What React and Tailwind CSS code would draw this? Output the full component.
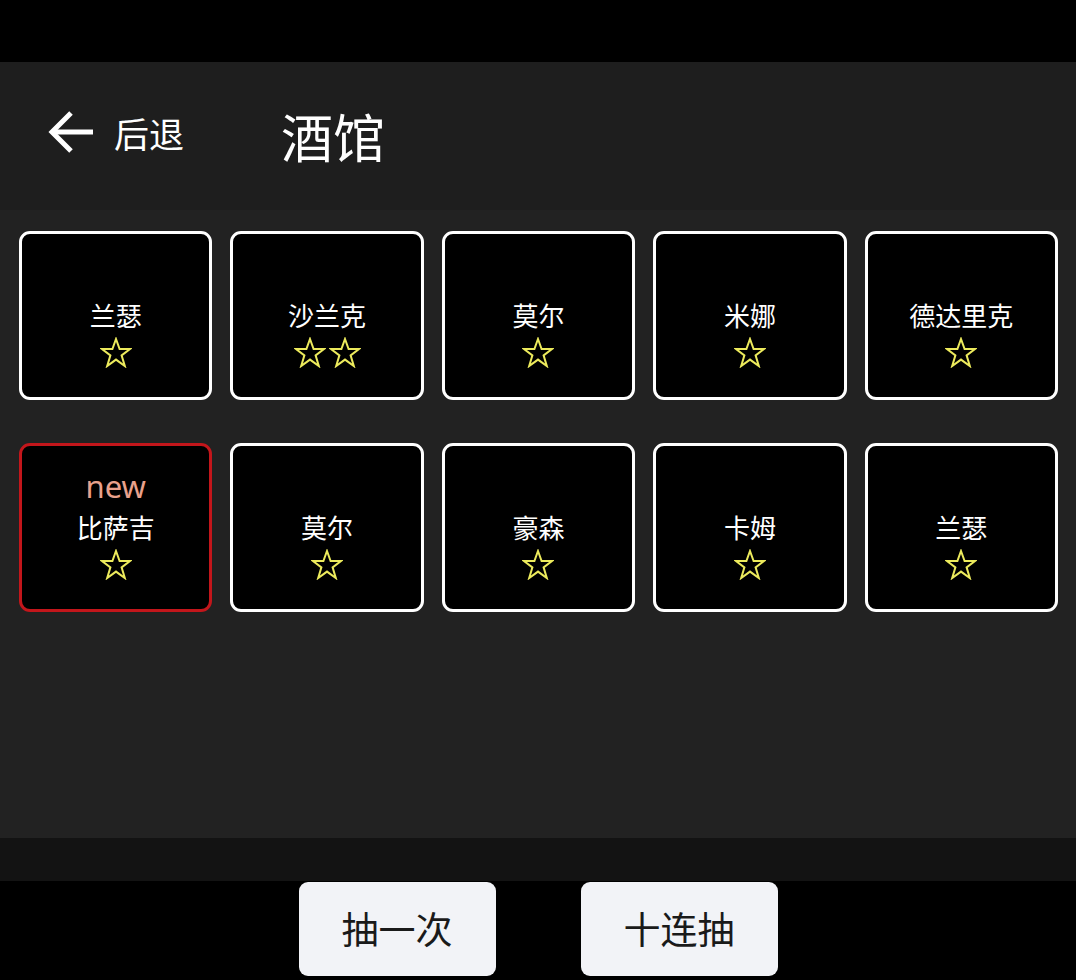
import React from "react";

const cjk = { fontFamily: '"Noto Sans CJK SC", "Noto Sans", sans-serif' };

// pulled heroes shown in the tavern grid
const heroes = [
  { name: "兰瑟", stars: 1 },
  { name: "沙兰克", stars: 2 },
  { name: "莫尔", stars: 1 },
  { name: "米娜", stars: 1 },
  { name: "德达里克", stars: 1 },
  { name: "比萨吉", stars: 1, isNew: true },
  { name: "莫尔", stars: 1 },
  { name: "豪森", stars: 1 },
  { name: "卡姆", stars: 1 },
  { name: "兰瑟", stars: 1 },
];

function Star() {
  return (
    <svg width="32" height="31" viewBox="0 0 32 31" fill="none">
      <polygon
        points="16,2 19.6,12 30,12 21.6,18.4 24.8,29 16,22.6 7.2,29 10.4,18.4 2,12 12.4,12"
        stroke="#ecea5c"
        strokeWidth="2"
        strokeLinejoin="miter"
      />
    </svg>
  );
}

function HeroCard({ hero }) {
  return (
    <div
      className={
        "h-[169px] bg-black rounded-[11px] border-[3px] flex flex-col items-center pt-[20px] " +
        (hero.isNew ? "border-[#c3161b]" : "border-white")
      }
    >
      <div className="h-[40px] leading-[40px] text-[31px] text-[#e9a18c]" style={{ fontFamily: '"Noto Sans", sans-serif' }}>
        {hero.isNew ? "new" : ""}
      </div>
      <div className="h-[42px] leading-[42px] text-[26px] text-white" style={cjk}>
        {hero.name}
      </div>
      <div className="flex gap-[3px] mt-[1px]">
        {Array.from({ length: hero.stars }).map((_, i) => (
          <Star key={i} />
        ))}
      </div>
    </div>
  );
}

export default function App() {
  return (
    <div className="w-[1076px] h-[980px] bg-black flex flex-col" style={cjk}>
      {/* status bar space */}
      <div className="h-[62px] bg-black" />

      {/* header */}
      <div className="h-[148px] bg-[#1e1e1e] flex items-center">
        <div className="flex items-center ml-[48px] mt-[-8px]">
          <svg width="46" height="42" viewBox="0 0 46 42" fill="none">
            <path d="M45 21H4" stroke="white" strokeWidth="5" />
            <path d="M23 2L4 21L23 40" stroke="white" strokeWidth="5" />
          </svg>
          <span className="ml-[20px] text-[35px] text-white leading-none">后退</span>
        </div>
        <div className="ml-[97px] text-[52px] text-white leading-none mt-[0px]">酒馆</div>
      </div>

      {/* hero grid */}
      <div className="flex-1 bg-[#222222] pt-[21px] pl-[19px] pr-[18px]">
        <div className="grid grid-cols-5 gap-x-[18px] gap-y-[43px]">
          {heroes.map((h, i) => (
            <HeroCard key={i} hero={h} />
          ))}
        </div>
      </div>

      <div className="h-[43px] bg-[#131313]" />

      {/* draw buttons */}
      <div className="h-[99px] bg-black flex justify-center gap-[85px] pt-[1px]">
        <button className="w-[197px] h-[94px] rounded-[9px] bg-[#f2f3f7] text-[37px] text-[#1a1a1a]">抽一次</button>
        <button className="w-[197px] h-[94px] rounded-[9px] bg-[#f2f3f7] text-[37px] text-[#1a1a1a]">十连抽</button>
      </div>
    </div>
  );
}
